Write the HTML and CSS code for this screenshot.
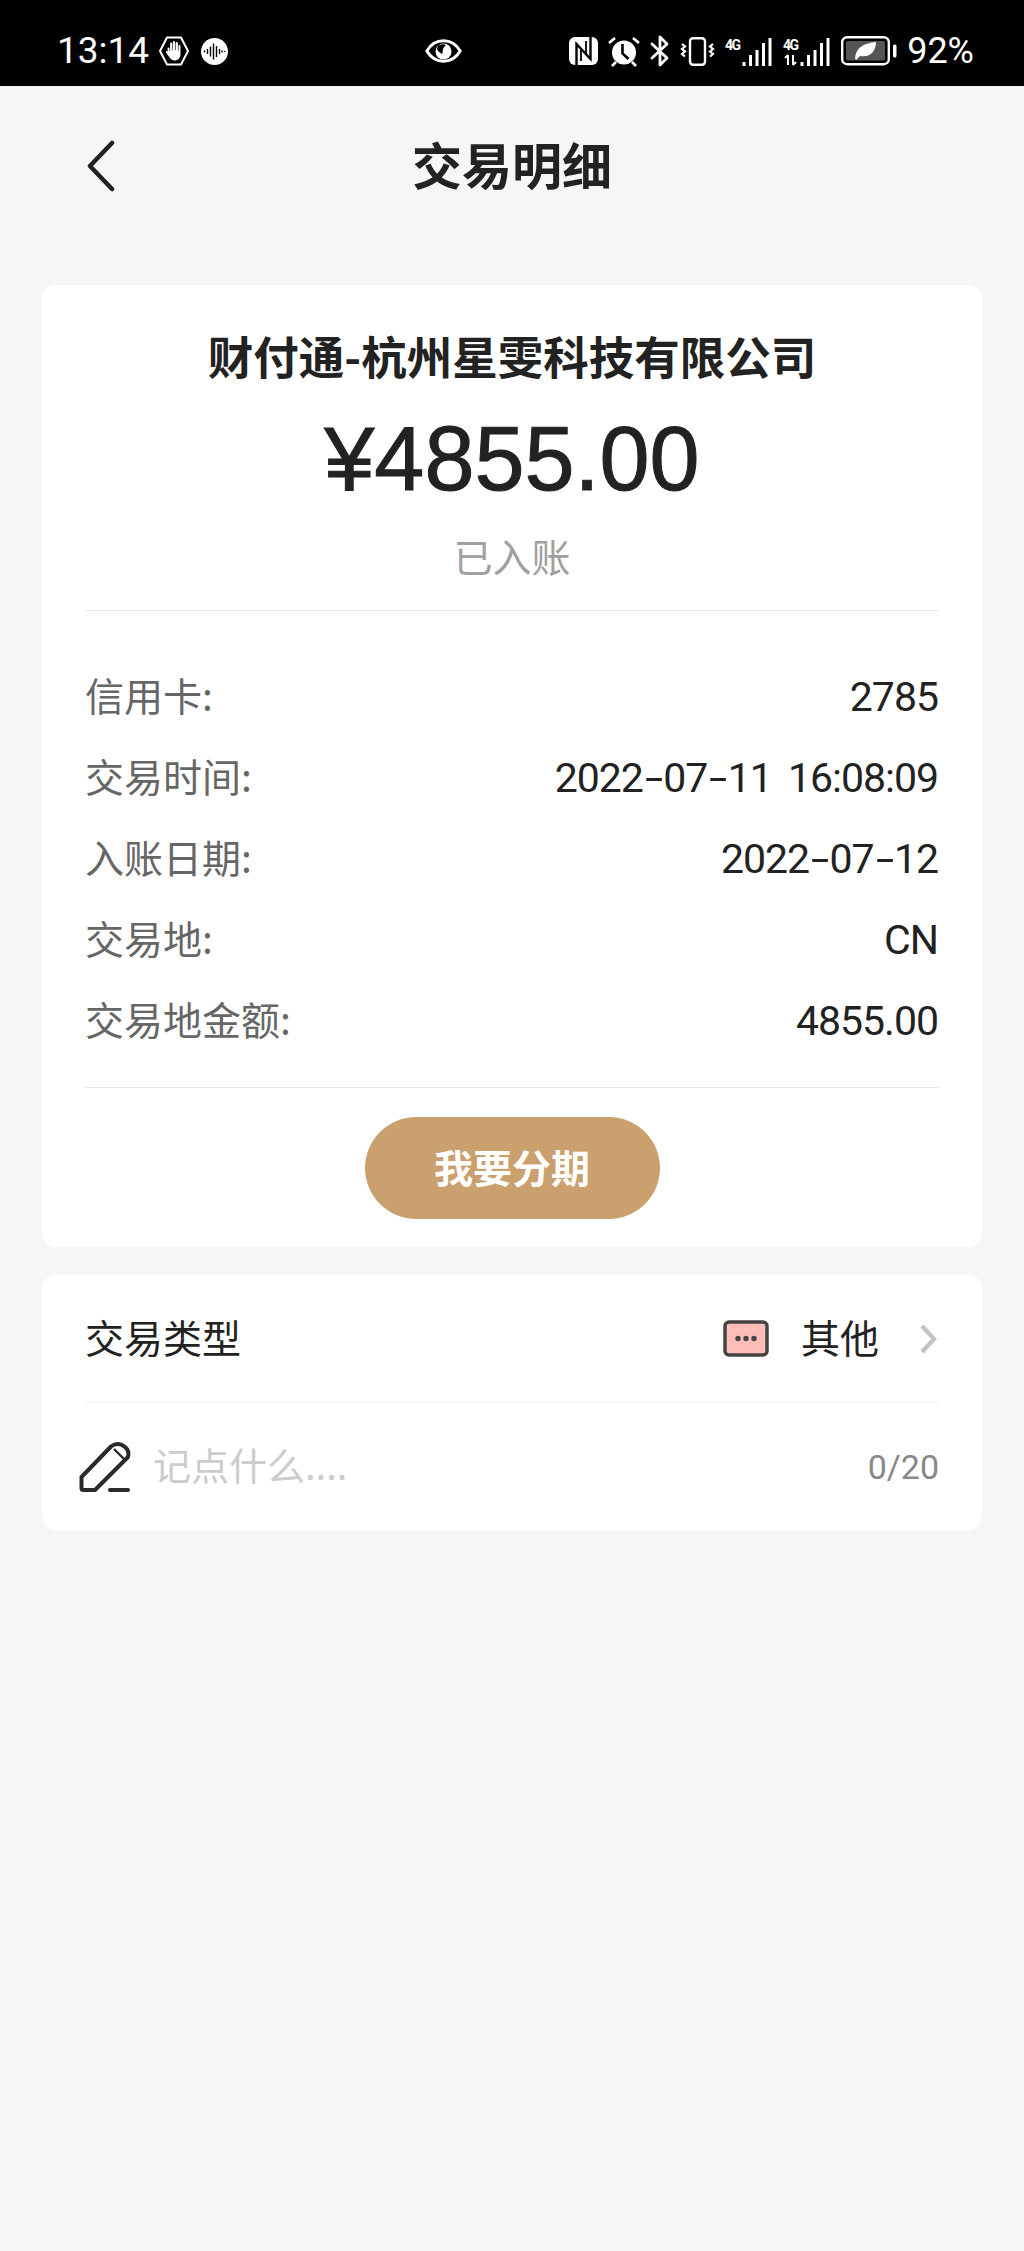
FILE: index.html
```html
<!DOCTYPE html>
<html lang="zh-CN">

<head>
    <meta name="viewport" content="width=device-width, initial-scale=1.0">
    <title>交易明细</title>
    <link rel="stylesheet" href="styles.css">
</head>

<body>
    <div class="status-bar">
        <div class="status-left">
            <span class="status-time">13:14</span>
            <svg class="icon-hand" width="30" height="30" viewBox="0 0 30 30">
                <path d="M8 1.500H22L29 15L22 28.500H8L1 15Z" fill="none" stroke="#fff" stroke-width="2" />
                <path d="M8.500 12.500a1 1 0 0 1 2 0V15h.6V7.500a1.100 1.100 0 0 1 2.200 0V14h.6V6.200a1.100 1.100 0 0 1 2.200 0V14h.6V7.200a1.100 1.100 0 0 1 2.200 0V14.500h.6V10a1 1 0 0 1 2 0V18c0 4-2.400 6.500-5.800 6.500-2.600 0-4.200-1-5.400-3.400L7 16.600c-.6-1.300 1-2.200 1.800-1Z" fill="#fff" />
            </svg>
            <svg class="icon-sound" width="27" height="27" viewBox="0 0 27 27">
                <circle cx="13.500" cy="13.500" r="13.500" fill="#fff" />
                <path d="M3.500 12.500v2M6.500 11v5M9.500 8.500v10M12.500 5.500v16M15.500 8v11M18.500 11v5M21 12.500v2M23.500 13v1" stroke="#000" stroke-width="1.400" />
            </svg>
        </div>
        <svg class="icon-eye" width="37" height="24" viewBox="0 0 37 24">
            <path d="M1.800 12C6 5 11.500 1.800 18.500 1.800S31 5 35.200 12C31 19 25.500 22.200 18.500 22.200S6 19 1.800 12Z" fill="none" stroke="#fff" stroke-width="3" />
            <circle cx="18.500" cy="12.500" r="8" fill="#fff" />
            <path d="M13 6.500Q18 4.500 21 6Q17 9 17.500 15Q13 13 12 10Z" fill="#000" />
        </svg>
        <div class="status-right">
            <svg width="29" height="28" viewBox="0 0 29 28">
                <rect width="29" height="28" rx="6" fill="#fff" />
                <path d="M7.500 28V7l14 15V0" fill="none" stroke="#000" stroke-width="2.400" />
                <path d="M12 24V13M17 16V4" stroke="#000" stroke-width="1.800" />
            </svg>
            <svg width="32" height="31" viewBox="0 0 32 31">
                <circle cx="16" cy="16.500" r="12" fill="#fff" />
                <path d="M14.500 8v9.500l6 5.500" fill="none" stroke="#000" stroke-width="2.600" />
                <path d="M1 7l6-5M25 2l6 5M4 30l4-4M28 30l-4-4" stroke="#fff" stroke-width="2.600" />
            </svg>
            <svg width="20" height="32" viewBox="0 0 20 32">
                <path d="M2 9L17 23L10 30V2L17 9L2 23" fill="none" stroke="#fff" stroke-width="2.800" stroke-linejoin="round" stroke-linecap="round" />
            </svg>
            <svg width="35" height="29" viewBox="0 0 35 29">
                <rect x="10" y="1.200" width="15" height="26.600" rx="3" fill="none" stroke="#fff" stroke-width="2.400" />
                <path d="M2 7l3 2.500-3 2.500 3 2.500-3 2.500 3 2.500M33 7l-3 2.500 3 2.500-3 2.500 3 2.500-3 2.500" fill="none" stroke="#fff" stroke-width="2.200" />
            </svg>
            <svg width="48" height="30" viewBox="0 0 48 30">
                <text class="net-label" x="0" y="14" textLength="16">4G</text>
                <path d="M19 26v4M25.500 19v11M32 14v16M38.500 7v23M45 2v28" stroke="#fff" stroke-width="3" />
            </svg>
            <svg width="48" height="30" viewBox="0 0 48 30">
                <text class="net-label" x="0" y="14" textLength="16">4G</text>
                <path d="M5 19v10M2 22l3-3M10 19v10M13 26l-3 3" fill="none" stroke="#fff" stroke-width="2" />
                <path d="M19 26v4M25.500 19v11M32 14v16M38.500 7v23M45 2v28" stroke="#fff" stroke-width="3" />
            </svg>
            <svg class="icon-battery" width="56" height="30" viewBox="0 0 56 30">
                <rect x="1.200" y="1.200" width="46.600" height="27" rx="5" fill="none" stroke="#fff" stroke-width="2.400" />
                <rect x="5" y="5" width="39" height="19.500" rx="2" fill="#555" />
                <path d="M14 22C15 11 24 7 35 6C35 15 29 22 19 20L15 24Z" fill="#fff" />
                <rect x="52" y="8.500" width="3.500" height="13" rx="1.500" fill="#fff" />
            </svg>
            <span class="status-battery">92%</span>
        </div>
    </div>

    <div class="nav">
        <svg class="nav-back" width="32" height="52" viewBox="0 0 32 52">
            <path d="M27 3L5 26L27 49" fill="none" stroke="#222" stroke-width="4.500" stroke-linecap="round" stroke-linejoin="round" />
        </svg>
        <h1 class="nav-title">交易明细</h1>
    </div>

    <div class="card card-detail">
        <div class="merchant">财付通-杭州星雯科技有限公司</div>
        <div class="amount">¥4855.00</div>
        <div class="state">已入账</div>
        <div class="info-list">
            <div class="info-row"><span class="info-label">信用卡:</span><span class="info-value">2785</span></div>
            <div class="info-row"><span class="info-label">交易时间:</span><span class="info-value">2022<span class="dash">-</span>07<span class="dash">-</span>11 16:08:09</span></div>
            <div class="info-row"><span class="info-label">入账日期:</span><span class="info-value">2022<span class="dash">-</span>07<span class="dash">-</span>12</span></div>
            <div class="info-row"><span class="info-label">交易地:</span><span class="info-value">CN</span></div>
            <div class="info-row"><span class="info-label">交易地金额:</span><span class="info-value">4855.00</span></div>
        </div>
        <div class="btn-wrap">
            <button class="btn-installment">我要分期</button>
        </div>
    </div>

    <div class="card card-extra">
        <div class="type-row">
            <span class="type-label">交易类型</span>
            <div class="type-value">
                <svg width="46" height="37" viewBox="0 0 46 37">
                    <rect x="2" y="2" width="42" height="33" rx="4" fill="#ffbdb8" stroke="#444" stroke-width="3.500" />
                    <circle cx="15" cy="18.500" r="2.700" fill="#444" />
                    <circle cx="23" cy="18.500" r="2.700" fill="#444" />
                    <circle cx="31" cy="18.500" r="2.700" fill="#444" />
                </svg>
                <span class="type-name">其他</span>
                <svg class="type-arrow" width="18" height="32" viewBox="0 0 18 32">
                    <path d="M3 3L15 16L3 29" fill="none" stroke="#c4c4c4" stroke-width="4.500" />
                </svg>
            </div>
        </div>
        <div class="memo-row">
            <svg class="memo-icon" width="54" height="54" viewBox="0 0 54 54">
                <path d="M3.500 37L33 6.500Q38 2.500 44 5Q52 9 50 17L17 50H5Q3.500 50 3.500 48Z" fill="none" stroke="#2a2a2a" stroke-width="4" stroke-linejoin="round" />
                <path d="M36 9L47 20" stroke="#2a2a2a" stroke-width="2.400" />
                <path d="M32 50H50" stroke="#2a2a2a" stroke-width="4" stroke-linecap="round" />
            </svg>
            <span class="memo-placeholder">记点什么....</span>
            <span class="memo-count">0/20</span>
        </div>
    </div>
</body>

</html>
```

FILE: styles.css
```css
body {
    margin: 0;
    padding: 0;
    height: 2251px;
    overflow: hidden;
    background: #f6f6f6;
    color: #222;
    font-family: "Liberation Sans", "Noto Sans CJK SC", sans-serif;
}

.status-bar {
    height: 86px;
    box-sizing: border-box;
    padding: 16px 50px 0 57px;
    display: flex;
    align-items: center;
    background: #000;
    color: #fff;
}

.status-left {
    width: 368px;
    display: flex;
    align-items: center;
}

.status-time,
.status-battery {
    font-family: Roboto, sans-serif;
    font-size: 36px;
    line-height: 40px;
}

.status-time {
    font-size: 37px;
}

.icon-hand {
    margin-left: 10px;
}

.icon-sound {
    margin-left: 12px;
}

.icon-eye {
    flex: none;
}

.status-right {
    margin-left: auto;
    display: flex;
    align-items: center;
    gap: 10px;
}

.net-label {
    fill: #fff;
    font-family: Roboto, sans-serif;
    font-size: 14px;
    font-weight: 700;
}

.nav {
    height: 160px;
    box-sizing: border-box;
    padding-bottom: 6px;
    position: relative;
    display: flex;
    align-items: center;
    justify-content: center;
}

.nav-back {
    position: absolute;
    left: 85px;
    top: 54px;
}

.nav-title {
    margin: 0;
    font-family: "Noto Sans CJK SC", sans-serif;
    font-size: 50px;
    line-height: 60px;
    font-weight: 700;
}

.card {
    margin: 0 42px;
    padding: 0 43px;
    background: #fff;
    border-radius: 14px;
}

.card-detail {
    margin-top: 39px;
    padding-top: 40px;
    padding-bottom: 28px;
}

.card-extra {
    margin-top: 28px;
}

.merchant {
    text-align: center;
    font-family: "Noto Sans CJK SC", sans-serif;
    font-size: 45.5px;
    line-height: 60px;
    font-weight: 700;
}

.amount {
    margin-top: 24px;
    text-align: center;
    font-size: 90px;
    line-height: 100px;
    -webkit-text-stroke: 1px #222;
}

.state {
    margin-top: 21px;
    padding-bottom: 30px;
    text-align: center;
    color: #a0a0a0;
    font-family: "Noto Sans CJK SC", sans-serif;
    font-size: 39px;
    line-height: 50px;
    border-bottom: 1px solid #e8e8e8;
}

.info-list {
    padding: 45px 0 26px;
    border-bottom: 1px solid #e8e8e8;
}

.info-row {
    height: 81px;
    display: flex;
    align-items: center;
    justify-content: space-between;
    font-family: Roboto, "Noto Sans CJK SC", sans-serif;
    font-size: 41px;
    letter-spacing: -1px;
}

.info-value {
    margin-right: 1px;
    word-spacing: 7px;
}

.dash {
    display: inline-block;
    margin: 0 5px;
    transform: scaleX(1.6);
}

.info-label {
    padding-bottom: 6px;
    color: #666;
    font-family: "Noto Sans CJK SC", sans-serif;
    font-size: 39px;
    letter-spacing: 0;
}

.btn-wrap {
    padding-top: 29px;
    display: flex;
    justify-content: center;
}

.btn-installment {
    width: 295px;
    height: 102px;
    padding: 0 0 4px;
    border: none;
    border-radius: 51px;
    background: #cba06f;
    color: #fff;
    font-family: "Noto Sans CJK SC", sans-serif;
    font-size: 39px;
    font-weight: 700;
}

.type-row {
    height: 128px;
    box-sizing: border-box;
    display: flex;
    align-items: center;
    justify-content: space-between;
    border-bottom: 1px solid #eee;
    font-family: "Noto Sans CJK SC", sans-serif;
    font-size: 39px;
}

.type-label,
.type-name {
    padding-bottom: 6px;
}

.type-value {
    display: flex;
    align-items: center;
}

.type-name {
    margin-left: 32px;
}

.type-arrow {
    margin-left: 40px;
    margin-right: 2px;
}

.memo-row {
    height: 127px;
    display: flex;
    align-items: center;
}

.memo-icon {
    margin-left: -7px;
}

.memo-placeholder {
    margin-left: 21px;
    padding-bottom: 6px;
    color: #ccc;
    font-family: "Noto Sans CJK SC", sans-serif;
    font-size: 38px;
}

.memo-count {
    margin-left: auto;
    color: #888;
    font-family: Roboto, sans-serif;
    font-size: 34px;
}
```
